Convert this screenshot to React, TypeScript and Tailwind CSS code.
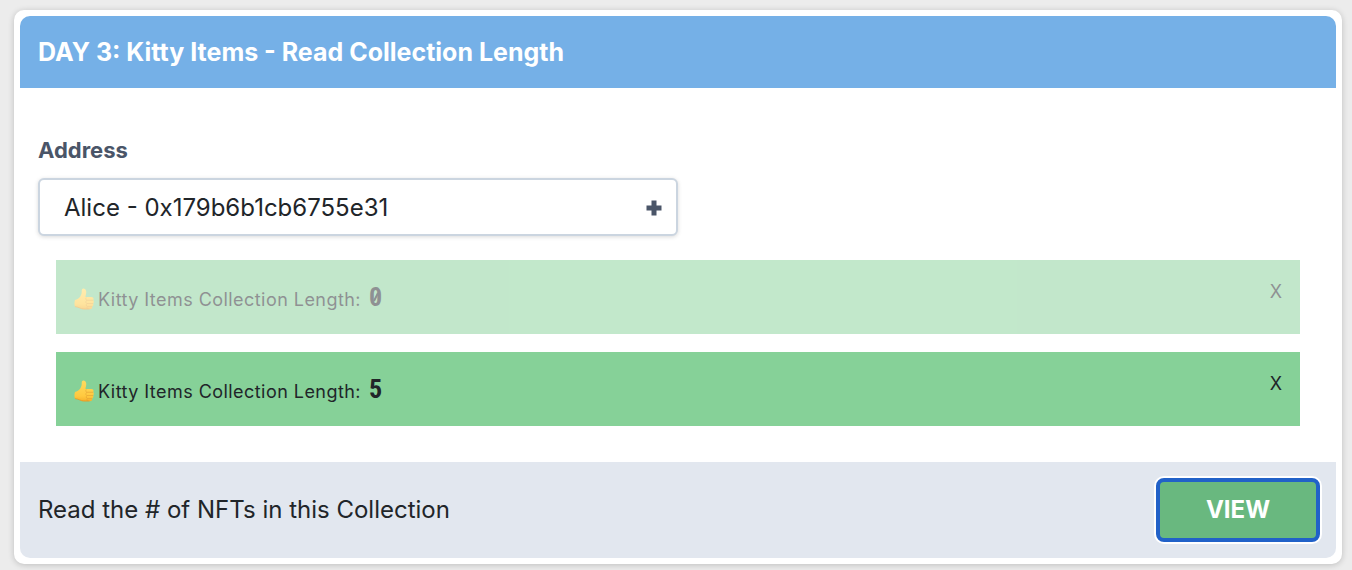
import { useState } from "react";

const accounts = ["Alice - 0x179b6b1cb6755e31", "Bob - 0xf3fcd2c1a78f5eee"];

function ThumbsUp({ id }: { id: string }) {
  return (
    <svg viewBox="0 0 40 44" className="mt-1 mr-1 h-[22px] w-5 shrink-0" role="img" aria-label="thumbs up">
      <defs>
        <linearGradient id={id} x1="0" y1="0" x2="0" y2="1">
          <stop offset="0" stopColor="#ffdb60" />
          <stop offset="0.75" stopColor="#ffc93f" />
          <stop offset="1" stopColor="#f6b02c" />
        </linearGradient>
      </defs>
      <path
        d="M2 24C6 22.500 10 21 12.500 17C15 13 15.500 10 15.500 5C15.500 2 17.500 0.500 19.500 1C24 2 25 6.500 24.300 10.500C24 13.500 23 15.500 23 18H35C38.500 18 40 21 38.500 24C40.200 26.500 40 29 38.300 30.800C39.400 33.600 38.500 35.800 36.500 37C37 40.300 35 42.500 31.500 42.500H20C13 42.500 10 38 2 37.500C0.500 34 0.500 28 2 24Z"
        fill={`url(#${id})`}
      />
      <path
        d="M26 24.500H38M26 31H38M26.500 37.200H36M24.500 19C23 21.500 23.500 23.500 25.500 24.500C23 27 23.300 29.500 25.500 31C24 33.500 24.500 36 26.500 37.200C25.500 39.200 26 40.800 27.500 42"
        fill="none"
        stroke="#e3a032"
        strokeWidth="1.200"
      />
      <path d="M2 37.200C10 38 13 42 20 42H31" fill="none" stroke="#e18f22" strokeWidth="1.200" />
    </svg>
  );
}

function Result({ value, faded, onClose }: { value: number; faded: boolean; onClose: () => void }) {
  return (
    <div
      className={`flex h-[74px] items-start justify-between bg-[#86d198] px-[18px] pt-[18px] text-[18px] ${faded ? "opacity-50" : ""}`}
    >
      <div className="flex h-[38px] items-center">
        <ThumbsUp id={`thumb-${value}`} />
        <span className="mt-[6px] tracking-wide">Kitty Items Collection Length:</span>
        <span className="relative ml-2 font-['Liberation_Sans_Narrow','Roboto_Condensed',sans-serif] text-[26px] font-bold">
          {value}
          {value === 0 && (
            <svg viewBox="0 0 12 20" className="absolute inset-0 m-auto h-5 w-3" aria-hidden="true">
              <path d="M4 14L8 6" stroke="currentColor" strokeWidth="2" />
            </svg>
          )}
        </span>
      </div>
      <button type="button" onClick={onClose} aria-label="Dismiss" className="leading-7">
        X
      </button>
    </div>
  );
}

export default function App() {
  const [results, setResults] = useState([0, 5]);
  return (
    <main className="min-h-screen bg-[#ececec] pt-[10px] pr-[10px] pb-[6px] pl-[14px] font-['Inter',sans-serif] text-[24px] leading-9 text-[#212529]">
      <section className="rounded-[10px] bg-white p-[6px] shadow-[0_1px_6px_rgba(0,0,0,0.2)]">
        <header className="rounded-t-[10px] bg-[#75b0e7] p-[18px] text-white">
          <h1 className="text-[25px] font-bold">DAY 3: Kitty Items - Read Collection Length</h1>
        </header>
        <div className="px-[18px] pt-[46px] pb-9">
          <label htmlFor="address" className="block pb-3 text-[22px] leading-8 font-bold text-[#4a5568]">
            Address
          </label>
          <div className="relative w-1/2">
            <select
              id="address"
              className="block h-[58px] w-full appearance-none rounded-[6px] border-2 border-[#cbd5e0] bg-white pt-0.5 pr-12 pl-6 shadow-[0_1px_4px_rgba(0,0,0,0.15)]"
            >
              {accounts.map((a) => (
                <option key={a}>{a}</option>
              ))}
            </select>
            <svg
              viewBox="0 0 16 16"
              className="pointer-events-none absolute inset-y-0 right-4 mt-[22px] h-4 w-4"
              aria-hidden="true"
            >
              <path d="M5.500 0.500H10.500V5.500H15.500V10.500H10.500V15.500H5.500V10.500H0.500V5.500H5.500Z" fill="#4a5568" />
            </svg>
          </div>
          <div className="mt-6 flex flex-col gap-[18px] px-[18px]">
            {results.map((v, i) => (
              <Result
                key={v}
                value={v}
                faded={i < results.length - 1}
                onClose={() => setResults(results.filter((r) => r !== v))}
              />
            ))}
          </div>
        </div>
        <footer className="flex items-center justify-between rounded-b-[10px] bg-[#e2e7ef] py-4 pr-4 pl-[18px]">
          <p>Read the # of NFTs in this Collection</p>
          <button
            type="button"
            className="h-16 w-[164px] rounded-[8px] border-4 border-[#2161c8] bg-[#69b87f] font-bold text-white ring-2 ring-white"
          >
            VIEW
          </button>
        </footer>
      </section>
    </main>
  );
}
